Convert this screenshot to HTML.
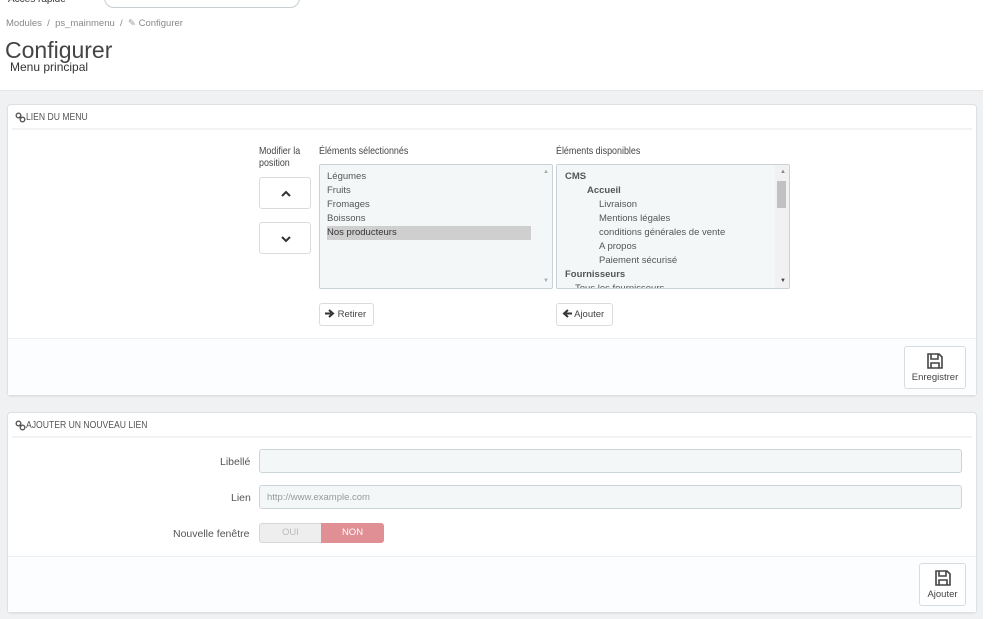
<!DOCTYPE html>
<html><head><meta charset="utf-8"><style>
*{box-sizing:border-box;margin:0;padding:0}
body{width:1000px;height:619px;overflow:hidden;background:#fff;font-family:"Liberation Sans",sans-serif;color:#555;position:relative;font-size:10px}
.a{position:absolute}
.gray{left:0;top:90px;width:983px;height:529px;background:#eff1f2;border-top:1px solid #e4e6e8}
.panel{background:#fff;border:1px solid #dde1e4;border-radius:4px;box-shadow:0 1px 1px #e0e3e5}
.ph{height:25px;border-bottom:2px solid #f1f3f4;margin:0 4px;padding:6px 3px;color:#555;white-space:nowrap}
.ph span.t{display:inline-block;transform:scaleX(0.82);transform-origin:left;font-size:10.5px;vertical-align:top}
.foot{background:#fcfdfe;border-top:1px solid #eef0f1}
.btn{background:#fff;border:1px solid #d8dcdf;border-radius:3px;color:#444;white-space:nowrap}
.box{background:#f4f7f8;border:1px solid #c9d3d7;border-radius:2px}
.it{font-size:9.5px;line-height:14px;color:#555}
.inp{background:#f4f7f8;border:1px solid #cbd5d9;border-radius:3px}
.nw{display:inline-block;transform:scaleX(0.85);transform-origin:left;white-space:nowrap}
</style></head><body>
<div class="a" style="left:8px;top:-6px;font-size:10px;color:#333">Accès rapide</div>
<div class="a" style="left:104px;top:-12px;width:196px;height:20px;border:1px solid #c8cfd3;border-radius:10px;background:#fff"></div>
<div class="a" style="left:6px;top:18px;font-size:9.5px;color:#888">Modules &nbsp;/&nbsp; ps_mainmenu &nbsp;/&nbsp; <span style="color:#999">✎</span> Configurer</div>
<div class="a" style="left:5px;top:37px;font-size:23px;color:#444">Configurer</div>
<div class="a" style="left:10px;top:60px;font-size:12px;color:#333">Menu principal</div>
<div class="a gray"></div>

<svg width="0" height="0" style="position:absolute"><defs><g id="lnk"><circle cx="3.5" cy="3.5" r="2.3" fill="none" stroke="#555" stroke-width="1.4"/><circle cx="7.5" cy="7.5" r="2.3" fill="none" stroke="#555" stroke-width="1.4"/><path d="M4.5 4.5l2 2" stroke="#555" stroke-width="1.4"/></g></defs></svg>

<div class="a panel" style="left:7px;top:104px;width:970px;height:292px">
 <div class="ph"><svg width="11" height="11" style="vertical-align:top;margin-top:1px"><use href="#lnk"/></svg><span class="t"> LIEN DU MENU</span></div>
 <div class="a foot" style="left:0;top:233px;width:968px;height:57px"></div>
</div>
<div class="a" style="left:259px;top:145px;font-size:10.5px;color:#444;line-height:12px"><span class="nw">Modifier la</span><br><span class="nw">position</span></div>
<div class="a btn" style="left:259px;top:177px;width:52px;height:32px"><svg width="10" height="8" style="position:absolute;left:21px;top:12px"><path d="M1 6l4-4 4 4" fill="none" stroke="#333" stroke-width="2"/></svg></div>
<div class="a btn" style="left:259px;top:222px;width:52px;height:32px"><svg width="10" height="8" style="position:absolute;left:21px;top:12px"><path d="M1 2l4 4 4-4" fill="none" stroke="#333" stroke-width="2"/></svg></div>
<div class="a" style="left:319px;top:145px;font-size:10.5px;color:#444"><span class="nw">Éléments sélectionnés</span></div>
<div class="a box" style="left:319px;top:164px;width:234px;height:125px">
 <div class="a it" style="left:7px;top:5px;width:204px">Légumes<br>Fruits<br>Fromages<br>Boissons<br><div style="background:#cfcfcf;color:#333">Nos producteurs</div></div>
 <div class="a" style="right:3px;top:4px;font-size:6px;color:#aaa">▲</div>
 <div class="a" style="right:3px;bottom:4px;font-size:6px;color:#aaa">▼</div>
</div>
<div class="a btn" style="left:319px;top:303px;width:55px;height:23px;font-size:9.5px;line-height:21px;padding-left:5px"><svg width="10" height="9" style="vertical-align:-1px"><path d="M0 4.5h6M4 1l4 3.5-4 3.5" fill="none" stroke="#333" stroke-width="2"/></svg> Retirer</div>
<div class="a" style="left:556px;top:145px;font-size:10.5px;color:#444"><span class="nw">Éléments disponibles</span></div>
<div class="a box" style="left:556px;top:164px;width:234px;height:125px;overflow:hidden">
 <div class="a it" style="left:8px;top:5px;width:210px;white-space:nowrap">
  <b>CMS</b><br><b style="margin-left:22px">Accueil</b><br>
  <span style="margin-left:34px">Livraison</span><br><span style="margin-left:34px">Mentions légales</span><br>
  <span style="margin-left:34px">conditions générales de vente</span><br><span style="margin-left:34px">A propos</span><br>
  <span style="margin-left:34px">Paiement sécurisé</span><br><b>Fournisseurs</b><br><span style="margin-left:10px">Tous les fournisseurs</span></div>
 <div class="a" style="right:0;top:0;width:14px;height:123px;background:#f1f1f1"></div>
 <div class="a" style="right:3px;top:16px;width:9px;height:27px;background:#c1c1c1"></div>
 <div class="a" style="right:3px;top:4px;font-size:6px;color:#888">▲</div>
 <div class="a" style="right:3px;bottom:4px;font-size:6px;color:#444">▼</div>
</div>
<div class="a btn" style="left:556px;top:303px;width:57px;height:23px;font-size:9.5px;line-height:21px;padding-left:5px"><svg width="10" height="9" style="vertical-align:-1px"><path d="M10 4.5H4M6 1L2 4.5 6 8" fill="none" stroke="#333" stroke-width="2"/></svg> Ajouter</div>
<div class="a btn" style="left:904px;top:346px;width:62px;height:43px;text-align:center;font-size:9.5px">
 <svg width="18" height="18" viewBox="0 0 18 18" style="margin-top:5px;display:block;margin-left:21px"><path d="M2 2h11l3 3v11H2z M5 2v5h7V2 M5 16v-5h8v5" fill="none" stroke="#444" stroke-width="1.6"/></svg>
 <div style="margin-top:2px">Enregistrer</div></div>

<div class="a panel" style="left:7px;top:412px;width:970px;height:201px">
 <div class="ph"><svg width="11" height="11" style="vertical-align:top;margin-top:1px"><use href="#lnk"/></svg><span class="t"> AJOUTER UN NOUVEAU LIEN</span></div>
 <div class="a foot" style="left:0;top:143px;width:968px;height:56px"></div>
</div>
<div class="a" style="left:220px;top:456px;font-size:10.5px;color:#555">Libellé</div>
<div class="a inp" style="left:259px;top:449px;width:703px;height:24px"></div>
<div class="a" style="left:231px;top:492px;font-size:10.5px;color:#555">Lien</div>
<div class="a inp" style="left:259px;top:485px;width:703px;height:24px;font-size:9.5px;color:#999;padding:6px 7px">http://www.example.com</div>
<div class="a" style="left:173px;top:528px;font-size:10.5px;color:#555">Nouvelle fenêtre</div>
<div class="a" style="left:259px;top:523px;width:63px;height:20px;background:#eee;border:1px solid #d8d8d8;border-radius:3px 0 0 3px;text-align:center;line-height:18px;color:#bbb;font-size:9.5px">OUI</div>
<div class="a" style="left:321px;top:523px;width:63px;height:20px;background:#e08f95;border-radius:0 3px 3px 0;text-align:center;line-height:20px;color:#fff;font-size:9.5px">NON</div>
<div class="a btn" style="left:919px;top:563px;width:47px;height:43px;text-align:center;font-size:9.5px">
 <svg width="18" height="18" viewBox="0 0 18 18" style="margin-top:5px;display:block;margin-left:14px"><path d="M2 2h11l3 3v11H2z M5 2v5h7V2 M5 16v-5h8v5" fill="none" stroke="#444" stroke-width="1.6"/></svg>
 <div style="margin-top:2px">Ajouter</div></div>
</body></html>
